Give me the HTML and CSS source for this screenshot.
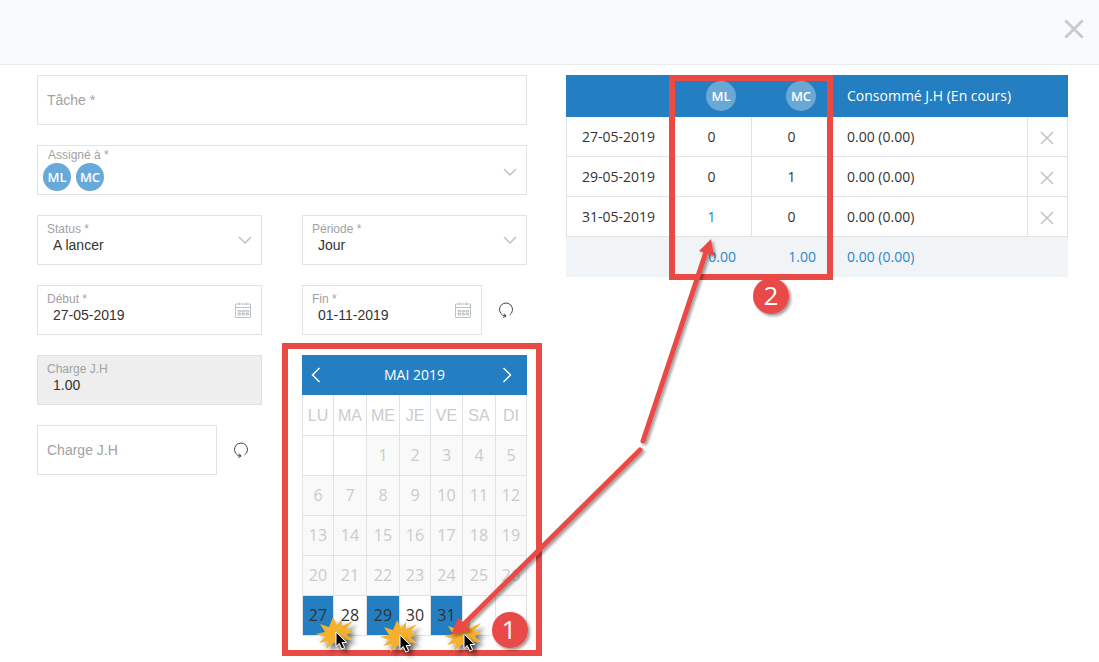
FILE: index.html
```html
<!DOCTYPE html>
<html lang="fr">
<head>
<meta charset="utf-8">
<title>Tâche</title>
<link rel="stylesheet" href="styles.css">
</head>
<body>
<svg class="defs" aria-hidden="true">
  <symbol id="chevron" viewBox="0 0 14 8"><path d="M1 1l6 6 6-6"/></symbol>
  <symbol id="cross" viewBox="0 0 14 14"><path d="M1 1l12 12M13 1L1 13"/></symbol>
  <symbol id="calendar" viewBox="0 0 16 16"><path d="M.5 2v13.500h15V2zM.5 5.500h15M4.500.500v2.500M11.500.500v2.500M3 8.500h2.500v1.500H3zM7 8.500h2.500v1.500H7zM11 8.500h2.500v1.500H11zM3 11.500h2.500V13H3zM7 11.500h2.500V13H7zM11 11.500h2.500V13H11z"/></symbol>
  <symbol id="reload" viewBox="0 0 16 16"><path d="M11.500 13A6.500 6.500 0 1 0 4.500 13L7.800 14.200M6.200 11.500L8 14.200 5 15.400"/></symbol>
</svg>

<header class="topbar">
  <button class="close" aria-label="Fermer"><svg><use href="#cross"/></svg></button>
</header>

<main class="stage">
  <form class="form">
    <label class="field field-empty"><span class="caption">Tâche *</span><input type="text"></label>
    <div class="field field-people">
      <span class="caption">Assigné à *</span>
      <span class="people"><span class="avatar">ML</span><span class="avatar">MC</span></span>
      <button type="button" class="field-icon" aria-label="Choisir"><svg class="chevron"><use href="#chevron"/></svg></button>
    </div>
    <div class="columns">
      <div class="stack">
        <label class="field"><span class="caption">Status *</span>
          <select><option>A lancer</option></select>
          <span class="field-icon"><svg class="chevron"><use href="#chevron"/></svg></span></label>
        <label class="field"><span class="caption">Début *</span><input type="text" value="27-05-2019">
          <span class="field-icon"><svg class="calendar-icon"><use href="#calendar"/></svg></span></label>
        <label class="field field-disabled"><span class="caption">Charge J.H</span><input type="text" value="1.00" readonly></label>
        <div class="with-reload">
          <label class="field field-empty"><span class="caption">Charge J.H</span><input type="text"></label>
          <button type="button" class="reload" aria-label="Réinitialiser la charge"><svg><use href="#reload"/></svg></button>
        </div>
      </div>
      <div class="stack">
        <label class="field"><span class="caption">Période *</span>
          <select><option>Jour</option></select>
          <span class="field-icon"><svg class="chevron"><use href="#chevron"/></svg></span></label>
        <div class="with-reload">
          <label class="field"><span class="caption">Fin *</span><input type="text" value="01-11-2019">
            <span class="field-icon"><svg class="calendar-icon"><use href="#calendar"/></svg></span></label>
          <button type="button" class="reload" aria-label="Réinitialiser la fin"><svg><use href="#reload"/></svg></button>
        </div>
        <section class="month">
          <div class="month-bar">
            <button type="button" aria-label="Mois précédent"><svg viewBox="0 0 10 16"><path d="M8.500 1l-7 7 7 7"/></svg></button>
            <span>MAI 2019</span>
            <button type="button" aria-label="Mois suivant"><svg viewBox="0 0 10 16"><path d="M1.500 1l7 7-7 7"/></svg></button>
          </div>
          <table class="days">
            <colgroup><col class="narrow"><col class="broad"><col class="broad"><col class="narrow"><col class="medium"><col class="broad"><col class="narrow"></colgroup>
            <thead><tr><th>LU</th><th>MA</th><th>ME</th><th>JE</th><th>VE</th><th>SA</th><th>DI</th></tr></thead>
            <tbody>
              <tr><td></td><td></td><td class="past">1</td><td class="past">2</td><td class="past">3</td><td class="past">4</td><td class="past">5</td></tr>
              <tr class="past"><td>6</td><td>7</td><td>8</td><td>9</td><td>10</td><td>11</td><td>12</td></tr>
              <tr class="past"><td>13</td><td>14</td><td>15</td><td>16</td><td>17</td><td>18</td><td>19</td></tr>
              <tr class="past"><td>20</td><td>21</td><td>22</td><td>23</td><td>24</td><td>25</td><td>26</td></tr>
              <tr><td class="picked">27</td><td>28</td><td class="picked">29</td><td>30</td><td class="picked">31</td><td></td><td></td></tr>
            </tbody>
          </table>
        </section>
      </div>
    </div>
  </form>

  <table class="plan">
    <colgroup><col class="col-date"><col class="col-person"><col class="col-person"><col><col class="col-remove"></colgroup>
    <thead><tr><th></th><th><span class="avatar avatar-head">ML</span></th><th><span class="avatar avatar-head">MC</span></th><th colspan="2" class="wide">Consommé J.H (En cours)</th></tr></thead>
    <tbody>
      <tr><td>27-05-2019</td><td class="count">0</td><td class="count">0</td><td>0.00 (0.00)</td><td class="remove"><button aria-label="Supprimer"><svg><use href="#cross"/></svg></button></td></tr>
      <tr><td>29-05-2019</td><td class="count">0</td><td class="count">1</td><td>0.00 (0.00)</td><td class="remove"><button aria-label="Supprimer"><svg><use href="#cross"/></svg></button></td></tr>
      <tr><td>31-05-2019</td><td class="count changed">1</td><td class="count">0</td><td>0.00 (0.00)</td><td class="remove"><button aria-label="Supprimer"><svg><use href="#cross"/></svg></button></td></tr>
    </tbody>
    <tfoot><tr><td></td><td class="total">0.00</td><td class="total">1.00</td><td colspan="2" class="wide">0.00 (0.00)</td></tr></tfoot>
  </table>
</main>

<svg class="notes" width="1099" height="662">
  <defs>
    <filter id="shade" x="-30%" y="-30%" width="170%" height="170%"><feDropShadow dx="2" dy="2" stdDeviation="1.500" flood-color="#000" flood-opacity=".4"/></filter>
    <filter id="cast" x="-30%" y="-30%" width="190%" height="190%"><feDropShadow dx="4" dy="4" stdDeviation="2" flood-color="#000" flood-opacity=".5"/></filter>
    <g id="click">
      <path filter="url(#cast)" fill="#f5b02e" d="M-3-16L1-8 6-14 6-7 17-12 10-4 18-2 10 1 16 7 8 6 4 13-2 9-10 16-8 8-17 10-11 4-20 1-11-1-16-9-7-6z"/>
      <path filter="url(#cast)" fill="#000" stroke="#fff" d="M0-1v14.500l3.300-3 2.500 5.500 2.800-1.300-2.500-5.200h4.600z"/>
    </g>
  </defs>
  <g fill="none" stroke="#ea4a44" stroke-width="6">
    <rect x="285" y="346" width="254" height="307"/>
    <rect x="672" y="78" width="158" height="199"/>
  </g>
  <use href="#click" x="336" y="633"/>
  <use href="#click" x="400" y="636"/>
  <use href="#click" x="464" y="635"/>
  <g filter="url(#shade)" fill="#ea4a44">
    <path d="M640 450L464 624" stroke="#ea4a44" stroke-width="5" stroke-linecap="round"/>
    <path d="M451 635l7-17 13 12z"/>
    <path d="M643 441L706 252" stroke="#ea4a44" stroke-width="5" stroke-linecap="round"/>
    <path d="M711 239l-12 12 15 5z"/>
  </g>
  <g class="badge">
    <circle cx="510" cy="630" r="18" filter="url(#shade)"/><text x="509" y="639">1</text>
    <circle cx="771" cy="296" r="18" filter="url(#shade)"/><text x="771" y="305">2</text>
  </g>
</svg>
</body>
</html>
```
FILE: styles.css
```css
* { box-sizing: border-box; }

body {
  margin: 0;
  position: relative;
  min-height: 100vh;
  background: #fff;
  color: #333;
  font: 14px/20px "Open Sans", sans-serif;
}

svg { fill: none; }
button { border: 0; padding: 0; background: none; color: inherit; font: inherit; cursor: pointer; }
button svg, .field-icon svg { stroke: currentColor; }
.defs { display: none; }

.topbar {
  display: flex;
  justify-content: flex-end;
  height: 65px;
  padding: 19px 15px;
  background: #f8fafc;
  border-bottom: 1px solid #e9ecef;
}
.close { width: 20px; height: 20px; color: #c8cbce; }
.close svg { display: block; width: 20px; height: 20px; stroke-width: 2; }

.stage {
  display: grid;
  grid-template-columns: 490fr 502fr;
  gap: 39px;
  align-items: start;
  padding: 10px 31px 26px 37px;
}

.form, .stack { display: flex; flex-direction: column; gap: 20px; }
.columns { display: grid; grid-template-columns: 1fr 1fr; gap: 40px; }
.with-reload { display: grid; grid-template-columns: 1fr 45px; }
.reload { display: grid; place-items: center; padding-left: 2px; color: #444; }
.reload svg { width: 16px; height: 16px; }

.field {
  display: grid;
  grid-template-columns: 1fr 32px;
  grid-template-rows: 14px 18px;
  height: 50px;
  padding-top: 6px;
  border: 1px solid #dfe5e6;
  background: #fff;
  font-family: "Liberation Sans", sans-serif;
}
.field .caption { padding-left: 9px; color: #a2a2a2; font-size: 12px; line-height: 14px; }
.field input, .field select {
  grid-column: 1;
  grid-row: 2;
  width: 100%;
  min-width: 0;
  border: 0;
  padding: 0 0 0 15px;
  background: none;
  color: #333;
  font: 14px/18px "Liberation Sans", sans-serif;
  appearance: none;
  outline: 0;
}
.field-icon { grid-column: 2; grid-row: 1 / 3; align-self: center; display: grid; place-items: center; padding-top: 4px; color: #bcc2c6; }
.chevron { width: 14px; height: 8px; stroke-width: 1.5; }
.calendar-icon { width: 16px; height: 16px; margin-right: 4px; }
.field-disabled { background: #eee; border-color: #dfe3e3; }

.field-empty { grid-template-rows: 1fr; padding-top: 0; }
.field-empty .caption { grid-area: 1 / 1; align-self: center; font-size: 14px; line-height: 18px; }
.field-empty input { grid-area: 1 / 1; }

.field-people { grid-template-rows: 15px 28px; padding-top: 2px; }
.field-people .caption { padding-left: 10px; }
.people { display: flex; gap: 5px; padding-left: 5px; }
.avatar {
  display: inline-grid;
  place-items: center;
  width: 28px;
  height: 28px;
  border-radius: 50%;
  background: #67a9d8;
  color: #fff;
  font: 600 13px/20px "Open Sans", sans-serif;
}
.avatar-head { width: 30px; height: 30px; background: #69a8d5; }

.month-bar {
  display: grid;
  grid-template-columns: 1fr auto 1fr;
  align-items: center;
  height: 40px;
  padding: 0 15px 0 9px;
  background: #237ec2;
  color: #fff;
  font-weight: 500;
}
.month-bar span { padding-left: 6px; }
.month-bar button:last-child { justify-self: end; }
.month-bar button:first-child { justify-self: start; }
.month-bar svg { display: block; width: 10px; height: 16px; stroke-width: 1.5; }

.days { width: 100%; table-layout: fixed; border-collapse: collapse; font-size: 16px; text-align: center; }
.narrow { width: 31px; }
.medium { width: 32px; }
.broad { width: 33px; }
.days th, .days td { height: 40px; padding: 0; border: 1px solid #dfe3e6; }
.days th { padding-top: 2px; color: #c8cdd0; font: 16px/20px "Liberation Sans", sans-serif; border-top: 0; }
.days .past { background: #f9f9f9; color: #c9cbcc; }
.days .picked { background: #237ec2; }

.plan { width: 100%; table-layout: fixed; border-collapse: separate; border-spacing: 0; text-align: left; }
.col-date { width: 105px; }
.col-person { width: 80px; }
.col-remove { width: 41px; }
.plan th { height: 42px; padding: 0 0 0 35px; background: #237ec2; color: #fff; font-weight: 500; }
.plan th .avatar { display: grid; }
.plan th.wide, .plan tfoot td.wide { padding-left: 16px; }
.plan td { height: 40px; padding: 0 0 0 15px; border: 0 solid #dfe3e6; border-width: 0 0 1px 1px; }
.plan td.count { padding: 0; text-align: center; }
.plan .changed { color: #237ec2; }
.plan td.remove { padding: 2px 0 0; border-right-width: 1px; color: #c0c4c8; }
.remove button { display: block; margin: auto; }
.remove svg { display: block; width: 14px; height: 14px; stroke-width: 1.5; }
.plan tfoot td { border: 0; background: #f0f4f6; color: #2d86c7; }
.plan td.total { padding: 0 15px 0 0; text-align: right; }

.notes { position: absolute; left: 0; top: 0; pointer-events: none; }
.badge { fill: #ea4a4a; font: 26px "Open Sans", sans-serif; text-anchor: middle; }
.badge text { fill: #fff; }
```
